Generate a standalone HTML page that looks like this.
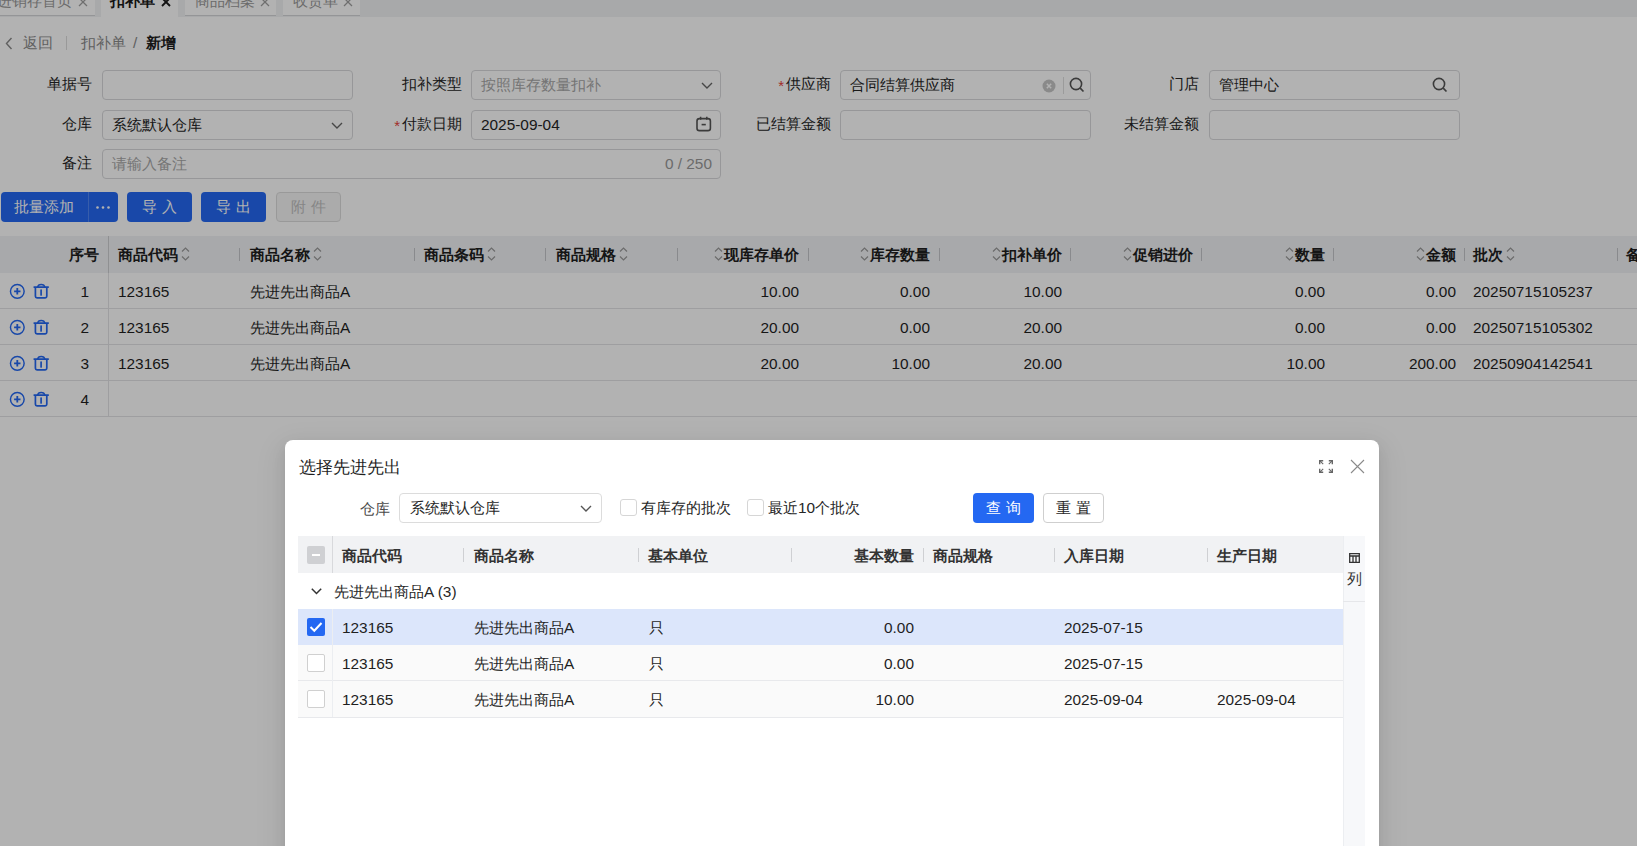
<!DOCTYPE html>
<html><head><meta charset="utf-8"><style>
*{box-sizing:border-box;margin:0;padding:0}
html,body{width:1637px;height:846px;overflow:hidden;background:#fff;font-family:"Liberation Sans",sans-serif;color:#333;font-size:15.4px}
.a{position:absolute;white-space:nowrap}
.tabbar{position:absolute;left:0;top:0;width:1637px;height:17px;background:#f1f2f4}
.tab{position:absolute;top:-11px;height:27px;background:#fff;border-bottom:1px solid #d5d6d9;color:#9a9a9a;font-size:15px;line-height:24px}
.tab.act{border-bottom:none;height:28px;color:#1a1a1a;font-weight:bold}
.lbl{position:absolute;text-align:right;white-space:nowrap;color:#262626;line-height:20px}
.req{color:#e8413b;font-size:15px;position:relative;top:2px;margin-right:2px}
.inp{position:absolute;height:30px;border:1px solid #d8d9dc;border-radius:4px;background:#fff;line-height:28px;padding-left:9px;white-space:nowrap;color:#262626}
.btn{position:absolute;top:192px;height:30px;border-radius:4px;background:#2468f2;color:#fff;text-align:center;line-height:30px}
.th{position:absolute;top:236px;height:37px;background:#f1f2f5;width:1637px;left:0}
.hc{position:absolute;top:0;height:37px;line-height:37px;font-weight:bold;color:#1f1f1f;white-space:nowrap}
.dv{position:absolute;top:12px;width:1px;height:13px;background:#c4c6ca}
.row{position:absolute;left:0;width:1637px;height:36px;border-bottom:1px solid #e2e3e6;background:#fff}
.c{position:absolute;top:1px;line-height:36px;white-space:nowrap;color:#1f1f1f}
.r{text-align:right}
.mask{position:absolute;left:0;top:0;width:1637px;height:846px;background:rgba(0,0,0,0.3)}
.modal{position:absolute;left:285px;top:440px;width:1094px;height:460px;background:#fff;border-radius:8px;overflow:hidden;box-shadow:0 6px 16px 0 rgba(0,0,0,.08),0 3px 6px -4px rgba(0,0,0,.12),0 9px 28px 8px rgba(0,0,0,.05)}
</style></head><body>
<div class="tabbar"></div>
<div class="tab" style="left:-10px;width:105px"><span class="a" style="left:7px;top:0">进销存首页</span><svg class="a" style="left:88px;top:8px" width="10" height="10" viewBox="0 0 10 10"><path d="M1 1L9 9M9 1L1 9" stroke="#a0a0a0" stroke-width="1.3"/></svg></div>
<div class="tab act" style="left:101px;width:77px"><span class="a" style="left:9px;top:0">扣补单</span><svg class="a" style="left:59.5px;top:8px" width="10" height="10" viewBox="0 0 10 10"><path d="M1 1L9 9M9 1L1 9" stroke="#1a1a1a" stroke-width="1.9"/></svg></div>
<div class="tab" style="left:185px;width:91px"><span class="a" style="left:9.5px;top:0">商品档案</span><svg class="a" style="left:74.5px;top:8px" width="10" height="10" viewBox="0 0 10 10"><path d="M1 1L9 9M9 1L1 9" stroke="#a0a0a0" stroke-width="1.3"/></svg></div>
<div class="tab" style="left:283px;width:77px"><span class="a" style="left:9.5px;top:0">收货单</span><svg class="a" style="left:60px;top:8px" width="10" height="10" viewBox="0 0 10 10"><path d="M1 1L9 9M9 1L1 9" stroke="#a0a0a0" stroke-width="1.3"/></svg></div>
<svg class="a" style="left:5px;top:37px" width="8" height="13" viewBox="0 0 8 13"><path d="M6.5 1L1.5 6.5 6.5 12" fill="none" stroke="#8a8a8a" stroke-width="1.4"/></svg>
<div class="a" style="left:23px;top:33px;line-height:20px;color:#8a8a8a">返回</div>
<div class="a" style="left:66px;top:36px;width:1px;height:14px;background:#dcdcdc"></div>
<div class="a" style="left:81px;top:33px;line-height:20px;color:#8a8a8a">扣补单</div>
<div class="a" style="left:133px;top:33px;line-height:20px;color:#8a8a8a">/</div>
<div class="a" style="left:146px;top:33px;line-height:20px;color:#1f1f1f;font-weight:bold">新增</div>
<div class="lbl" style="left:-208px;width:300px;top:74px">单据号</div>
<div class="inp" style="left:102px;top:70px;width:251px"></div>
<div class="lbl" style="left:162px;width:300px;top:74px">扣补类型</div>
<div class="inp" style="left:471px;top:70px;width:250px;color:#a8a8a8">按照库存数量扣补<svg class="a" style="left:229px;top:11px" width="12" height="7" viewBox="0 0 12 7"><path d="M1 1l5 5 5-5" fill="none" stroke="#666" stroke-width="1.4"/></svg></div>
<div class="lbl" style="left:531px;width:300px;top:74px"><span class="req">*</span>供应商</div>
<div class="inp" style="left:840px;top:70px;width:251px">合同结算供应商<svg class="a" style="left:201px;top:8px" width="14" height="14" viewBox="0 0 14 14"><circle cx="7" cy="7" r="6.5" fill="#c6c6c6"/><path d="M4.8 4.8l4.4 4.4M9.2 4.8l-4.4 4.4" stroke="#fff" stroke-width="1.5"/></svg><div class="a" style="left:222px;top:6px;width:1px;height:17px;background:#dedede"></div><svg class="a" style="left:228px;top:6px" width="16" height="16" viewBox="0 0 16 16"><circle cx="7" cy="7" r="5.6" fill="none" stroke="#555" stroke-width="1.6"/><path d="M11.2 11.2L14.5 14.5" stroke="#555" stroke-width="1.7"/></svg></div>
<div class="lbl" style="left:899px;width:300px;top:74px">门店</div>
<div class="inp" style="left:1209px;top:70px;width:251px">管理中心<svg class="a" style="left:222px;top:6px" width="16" height="16" viewBox="0 0 16 16"><circle cx="7" cy="7" r="5.6" fill="none" stroke="#555" stroke-width="1.6"/><path d="M11.2 11.2L14.5 14.5" stroke="#555" stroke-width="1.7"/></svg></div>
<div class="lbl" style="left:-208px;width:300px;top:114px">仓库</div>
<div class="inp" style="left:102px;top:110px;width:251px">系统默认仓库<svg class="a" style="left:228px;top:11px" width="12" height="7" viewBox="0 0 12 7"><path d="M1 1l5 5 5-5" fill="none" stroke="#666" stroke-width="1.4"/></svg></div>
<div class="lbl" style="left:162px;width:300px;top:114px"><span class="req">*</span>付款日期</div>
<div class="inp" style="left:471px;top:110px;width:250px">2025-09-04<svg class="a" style="left:224px;top:5px" width="16" height="16" viewBox="0 0 16 16"><rect x="1" y="2.6" width="13.4" height="12" rx="2.4" fill="none" stroke="#555" stroke-width="1.6"/><path d="M4.6 0.8v3M10.8 0.8v3" stroke="#555" stroke-width="1.5"/><path d="M5.6 8.6h4.2" stroke="#555" stroke-width="1.6"/></svg></div>
<div class="lbl" style="left:531px;width:300px;top:114px">已结算金额</div>
<div class="inp" style="left:840px;top:110px;width:251px"></div>
<div class="lbl" style="left:899px;width:300px;top:114px">未结算金额</div>
<div class="inp" style="left:1209px;top:110px;width:251px"></div>
<div class="lbl" style="left:-208px;width:300px;top:153px">备注</div>
<div class="inp" style="left:102px;top:149px;width:619px;color:#a8a8a8">请输入备注<span class="a" style="right:8px;top:0;color:#9a9a9a">0 / 250</span></div>
<div class="btn" style="left:1px;width:117px"><span class="a" style="left:13px;top:0">批量添加</span><span class="a" style="left:87px;top:0;width:1px;height:30px;background:#4f86f5"></span><svg class="a" style="left:95px;top:14px" width="14" height="3" viewBox="0 0 14 3"><circle cx="1.5" cy="1.5" r="1.3" fill="#fff"/><circle cx="7" cy="1.5" r="1.3" fill="#fff"/><circle cx="12.5" cy="1.5" r="1.3" fill="#fff"/></svg></div>
<div class="btn" style="left:127px;width:65px;letter-spacing:5px;text-indent:5px">导入</div>
<div class="btn" style="left:201px;width:65px;letter-spacing:5px;text-indent:5px">导出</div>
<div class="btn" style="left:276px;width:65px;letter-spacing:5px;text-indent:5px;background:#f5f5f5;border:1px solid #dcdcdc;color:#c0c0c0;line-height:28px">附件</div>
<div class="th"><div class="a" style="left:108px;top:0;width:1px;height:37px;background:#cdced2"></div><div class="hc r" style="left:0;width:99px">序号</div><div class="hc" style="left:118px">商品代码</div><svg class="a" style="left:181px;top:11px" width="9" height="14" viewBox="0 0 9 14"><path d="M1 4.5l3.5-3.5 3.5 3.5M1 9.5l3.5 3.5 3.5-3.5" fill="none" stroke="#9a9a9a" stroke-width="1.2"/></svg><div class="hc" style="left:250px">商品名称</div><svg class="a" style="left:313px;top:11px" width="9" height="14" viewBox="0 0 9 14"><path d="M1 4.5l3.5-3.5 3.5 3.5M1 9.5l3.5 3.5 3.5-3.5" fill="none" stroke="#9a9a9a" stroke-width="1.2"/></svg><div class="hc" style="left:424px">商品条码</div><svg class="a" style="left:487px;top:11px" width="9" height="14" viewBox="0 0 9 14"><path d="M1 4.5l3.5-3.5 3.5 3.5M1 9.5l3.5 3.5 3.5-3.5" fill="none" stroke="#9a9a9a" stroke-width="1.2"/></svg><div class="hc" style="left:556px">商品规格</div><svg class="a" style="left:619px;top:11px" width="9" height="14" viewBox="0 0 9 14"><path d="M1 4.5l3.5-3.5 3.5 3.5M1 9.5l3.5 3.5 3.5-3.5" fill="none" stroke="#9a9a9a" stroke-width="1.2"/></svg><div class="hc" style="left:1473px">批次</div><svg class="a" style="left:1506px;top:11px" width="9" height="14" viewBox="0 0 9 14"><path d="M1 4.5l3.5-3.5 3.5 3.5M1 9.5l3.5 3.5 3.5-3.5" fill="none" stroke="#9a9a9a" stroke-width="1.2"/></svg><div class="hc" style="left:1626px">备注</div><div class="hc r" style="left:677px;width:122px">现库存单价</div><svg class="a" style="left:714px;top:11px" width="9" height="14" viewBox="0 0 9 14"><path d="M1 4.5l3.5-3.5 3.5 3.5M1 9.5l3.5 3.5 3.5-3.5" fill="none" stroke="#9a9a9a" stroke-width="1.2"/></svg><div class="hc r" style="left:808px;width:122px">库存数量</div><svg class="a" style="left:860px;top:11px" width="9" height="14" viewBox="0 0 9 14"><path d="M1 4.5l3.5-3.5 3.5 3.5M1 9.5l3.5 3.5 3.5-3.5" fill="none" stroke="#9a9a9a" stroke-width="1.2"/></svg><div class="hc r" style="left:939px;width:123px">扣补单价</div><svg class="a" style="left:992px;top:11px" width="9" height="14" viewBox="0 0 9 14"><path d="M1 4.5l3.5-3.5 3.5 3.5M1 9.5l3.5 3.5 3.5-3.5" fill="none" stroke="#9a9a9a" stroke-width="1.2"/></svg><div class="hc r" style="left:1070px;width:123px">促销进价</div><svg class="a" style="left:1123px;top:11px" width="9" height="14" viewBox="0 0 9 14"><path d="M1 4.5l3.5-3.5 3.5 3.5M1 9.5l3.5 3.5 3.5-3.5" fill="none" stroke="#9a9a9a" stroke-width="1.2"/></svg><div class="hc r" style="left:1201px;width:124px">数量</div><svg class="a" style="left:1285px;top:11px" width="9" height="14" viewBox="0 0 9 14"><path d="M1 4.5l3.5-3.5 3.5 3.5M1 9.5l3.5 3.5 3.5-3.5" fill="none" stroke="#9a9a9a" stroke-width="1.2"/></svg><div class="hc r" style="left:1333px;width:123px">金额</div><svg class="a" style="left:1416px;top:11px" width="9" height="14" viewBox="0 0 9 14"><path d="M1 4.5l3.5-3.5 3.5 3.5M1 9.5l3.5 3.5 3.5-3.5" fill="none" stroke="#9a9a9a" stroke-width="1.2"/></svg><div class="dv" style="left:239px"></div><div class="dv" style="left:414px"></div><div class="dv" style="left:545px"></div><div class="dv" style="left:677px"></div><div class="dv" style="left:808px"></div><div class="dv" style="left:939px"></div><div class="dv" style="left:1070px"></div><div class="dv" style="left:1201px"></div><div class="dv" style="left:1333px"></div><div class="dv" style="left:1464px"></div><div class="dv" style="left:1617px"></div></div>
<div class="row" style="top:273px"><svg class="a" style="left:9px;top:10px" width="17" height="17" viewBox="0 0 17 17"><circle cx="8.3" cy="8.3" r="6.85" fill="none" stroke="#2468f2" stroke-width="1.45"/><path d="M8.3 5.1v6.4M5.1 8.3h6.4" stroke="#2468f2" stroke-width="1.8"/></svg><svg class="a" style="left:33px;top:10px" width="17" height="17" viewBox="0 0 17 17"><path d="M1.2 4.1h14" fill="none" stroke="#2468f2" stroke-width="1.7" stroke-linecap="round"/><path d="M4.6 4.1Q5 1.4 8.2 1.4T11.8 4.1" fill="none" stroke="#2468f2" stroke-width="1.5"/><path d="M2.4 4.6V13.3a1.6 1.6 0 0 0 1.6 1.6H12.2a1.6 1.6 0 0 0 1.6-1.6V4.6" fill="none" stroke="#2468f2" stroke-width="1.7"/><path d="M8.1 7v5" stroke="#2468f2" stroke-width="1.7" stroke-linecap="round"/></svg><div class="a" style="left:108px;top:0;width:1px;height:36px;background:#e2e3e6"></div><div class="c r" style="left:0;width:89px">1</div><div class="c" style="left:118px">123165</div><div class="c" style="left:250px">先进先出商品A</div><div class="c r" style="left:677px;width:122px">10.00</div><div class="c r" style="left:808px;width:122px">0.00</div><div class="c r" style="left:939px;width:123px">10.00</div><div class="c r" style="left:1201px;width:124px">0.00</div><div class="c r" style="left:1333px;width:123px">0.00</div><div class="c" style="left:1473px">20250715105237</div></div>
<div class="row" style="top:309px"><svg class="a" style="left:9px;top:10px" width="17" height="17" viewBox="0 0 17 17"><circle cx="8.3" cy="8.3" r="6.85" fill="none" stroke="#2468f2" stroke-width="1.45"/><path d="M8.3 5.1v6.4M5.1 8.3h6.4" stroke="#2468f2" stroke-width="1.8"/></svg><svg class="a" style="left:33px;top:10px" width="17" height="17" viewBox="0 0 17 17"><path d="M1.2 4.1h14" fill="none" stroke="#2468f2" stroke-width="1.7" stroke-linecap="round"/><path d="M4.6 4.1Q5 1.4 8.2 1.4T11.8 4.1" fill="none" stroke="#2468f2" stroke-width="1.5"/><path d="M2.4 4.6V13.3a1.6 1.6 0 0 0 1.6 1.6H12.2a1.6 1.6 0 0 0 1.6-1.6V4.6" fill="none" stroke="#2468f2" stroke-width="1.7"/><path d="M8.1 7v5" stroke="#2468f2" stroke-width="1.7" stroke-linecap="round"/></svg><div class="a" style="left:108px;top:0;width:1px;height:36px;background:#e2e3e6"></div><div class="c r" style="left:0;width:89px">2</div><div class="c" style="left:118px">123165</div><div class="c" style="left:250px">先进先出商品A</div><div class="c r" style="left:677px;width:122px">20.00</div><div class="c r" style="left:808px;width:122px">0.00</div><div class="c r" style="left:939px;width:123px">20.00</div><div class="c r" style="left:1201px;width:124px">0.00</div><div class="c r" style="left:1333px;width:123px">0.00</div><div class="c" style="left:1473px">20250715105302</div></div>
<div class="row" style="top:345px"><svg class="a" style="left:9px;top:10px" width="17" height="17" viewBox="0 0 17 17"><circle cx="8.3" cy="8.3" r="6.85" fill="none" stroke="#2468f2" stroke-width="1.45"/><path d="M8.3 5.1v6.4M5.1 8.3h6.4" stroke="#2468f2" stroke-width="1.8"/></svg><svg class="a" style="left:33px;top:10px" width="17" height="17" viewBox="0 0 17 17"><path d="M1.2 4.1h14" fill="none" stroke="#2468f2" stroke-width="1.7" stroke-linecap="round"/><path d="M4.6 4.1Q5 1.4 8.2 1.4T11.8 4.1" fill="none" stroke="#2468f2" stroke-width="1.5"/><path d="M2.4 4.6V13.3a1.6 1.6 0 0 0 1.6 1.6H12.2a1.6 1.6 0 0 0 1.6-1.6V4.6" fill="none" stroke="#2468f2" stroke-width="1.7"/><path d="M8.1 7v5" stroke="#2468f2" stroke-width="1.7" stroke-linecap="round"/></svg><div class="a" style="left:108px;top:0;width:1px;height:36px;background:#e2e3e6"></div><div class="c r" style="left:0;width:89px">3</div><div class="c" style="left:118px">123165</div><div class="c" style="left:250px">先进先出商品A</div><div class="c r" style="left:677px;width:122px">20.00</div><div class="c r" style="left:808px;width:122px">10.00</div><div class="c r" style="left:939px;width:123px">20.00</div><div class="c r" style="left:1201px;width:124px">10.00</div><div class="c r" style="left:1333px;width:123px">200.00</div><div class="c" style="left:1473px">20250904142541</div></div>
<div class="row" style="top:381px"><svg class="a" style="left:9px;top:10px" width="17" height="17" viewBox="0 0 17 17"><circle cx="8.3" cy="8.3" r="6.85" fill="none" stroke="#2468f2" stroke-width="1.45"/><path d="M8.3 5.1v6.4M5.1 8.3h6.4" stroke="#2468f2" stroke-width="1.8"/></svg><svg class="a" style="left:33px;top:10px" width="17" height="17" viewBox="0 0 17 17"><path d="M1.2 4.1h14" fill="none" stroke="#2468f2" stroke-width="1.7" stroke-linecap="round"/><path d="M4.6 4.1Q5 1.4 8.2 1.4T11.8 4.1" fill="none" stroke="#2468f2" stroke-width="1.5"/><path d="M2.4 4.6V13.3a1.6 1.6 0 0 0 1.6 1.6H12.2a1.6 1.6 0 0 0 1.6-1.6V4.6" fill="none" stroke="#2468f2" stroke-width="1.7"/><path d="M8.1 7v5" stroke="#2468f2" stroke-width="1.7" stroke-linecap="round"/></svg><div class="a" style="left:108px;top:0;width:1px;height:36px;background:#e2e3e6"></div><div class="c r" style="left:0;width:89px">4</div></div>
<div class="mask"></div>
<div class="modal"><div class="a" style="left:14px;top:17px;font-size:17px;line-height:22px;color:#1f1f1f">选择先进先出</div>
<svg class="a" style="left:1034px;top:20px" width="14" height="13" viewBox="0 0 14 13"><g fill="none" stroke="#666" stroke-width="1.4"><path d="M0.7 4.2V0.7H4.2M9.8 0.7h3.5V4.2M13.3 8.8v3.5H9.8M4.2 12.3H0.7V8.8"/><path d="M1.2 1.2l3 3M12.8 1.2l-3 3M12.8 11.8l-3-3M1.2 11.8l3-3" stroke-width="1.1"/></g></svg>
<svg class="a" style="left:1065px;top:19px" width="15" height="15" viewBox="0 0 15 15"><path d="M1 1L14 14M14 1L1 14" stroke="#8a8a8a" stroke-width="1.1" fill="none"/></svg>
<div class="a" style="left:75px;top:59px;line-height:20px;color:#4a4a4a">仓库</div>
<div class="a" style="left:114px;top:53px;width:203px;height:30px;border:1px solid #dcdcdc;border-radius:4px;line-height:28px;padding-left:10px;color:#262626">系统默认仓库<svg class="a" style="left:180px;top:11px" width="12" height="7" viewBox="0 0 12 7"><path d="M1 1l5 5 5-5" fill="none" stroke="#555" stroke-width="1.4"/></svg></div>
<div class="a" style="left:335px;top:59px;width:17px;height:17px;border:1px solid #d6d6d6;border-radius:3px"></div>
<div class="a" style="left:356px;top:58px;line-height:20px;color:#262626">有库存的批次</div>
<div class="a" style="left:462px;top:59px;width:17px;height:17px;border:1px solid #d6d6d6;border-radius:3px"></div>
<div class="a" style="left:483px;top:58px;line-height:20px;color:#262626">最近10个批次</div>
<div class="a" style="left:688px;top:53px;width:61px;height:30px;border-radius:4px;background:#2468f2;color:#fff;line-height:30px;text-align:center;letter-spacing:5px;text-indent:5px">查询</div>
<div class="a" style="left:758px;top:53px;width:61px;height:30px;border-radius:4px;border:1px solid #cfcfcf;color:#262626;line-height:28px;text-align:center;letter-spacing:5px;text-indent:5px">重置</div>
<div class="a" style="left:13px;top:96px;width:1045px;height:37px;background:#f1f2f4"></div>
<div class="a" style="left:1058px;top:96px;width:22px;height:400px;background:#f7f8fa;border-left:1px solid #eceef1"></div>
<div class="a" style="left:1058px;top:161px;width:22px;height:1px;background:#e6e7ea"></div>
<svg class="a" style="left:1064px;top:113px" width="11" height="10" viewBox="0 0 11 10"><path d="M0.7 0.7h9.6v8.6H0.7zM0.7 3h9.6M4 3v6.3M7 3v6.3" fill="none" stroke="#333" stroke-width="1.3"/></svg>
<div class="a" style="left:1062px;top:129px;line-height:20px;color:#333;font-size:15px">列</div>
<div class="a" style="left:47px;top:96px;width:1px;height:37px;background:#d8d9dc"></div>
<div class="a" style="left:22px;top:106px;width:18px;height:18px;background:#cfd0d3;border-radius:2px"><div class="a" style="left:5px;top:8px;width:8px;height:2px;background:#fff"></div></div>
<div class="a" style="left:57px;top:97px;line-height:37px;font-weight:bold;color:#333">商品代码</div>
<div class="a" style="left:189px;top:97px;line-height:37px;font-weight:bold;color:#333">商品名称</div>
<div class="a" style="left:363px;top:97px;line-height:37px;font-weight:bold;color:#333">基本单位</div>
<div class="a" style="left:507px;top:97px;width:122px;text-align:right;line-height:37px;font-weight:bold;color:#333">基本数量</div>
<div class="a" style="left:648px;top:97px;line-height:37px;font-weight:bold;color:#333">商品规格</div>
<div class="a" style="left:779px;top:97px;line-height:37px;font-weight:bold;color:#333">入库日期</div>
<div class="a" style="left:932px;top:97px;line-height:37px;font-weight:bold;color:#333">生产日期</div>
<div class="a" style="left:178px;top:108px;width:1px;height:14px;background:#cfd0d3"></div>
<div class="a" style="left:353px;top:108px;width:1px;height:14px;background:#cfd0d3"></div>
<div class="a" style="left:506px;top:108px;width:1px;height:14px;background:#cfd0d3"></div>
<div class="a" style="left:638px;top:108px;width:1px;height:14px;background:#cfd0d3"></div>
<div class="a" style="left:769px;top:108px;width:1px;height:14px;background:#cfd0d3"></div>
<div class="a" style="left:922px;top:108px;width:1px;height:14px;background:#cfd0d3"></div>
<svg class="a" style="left:26px;top:148px" width="11" height="7" viewBox="0 0 11 7"><path d="M0.8 0.8l4.7 4.7 4.7-4.7" fill="none" stroke="#333" stroke-width="1.5"/></svg>
<div class="a" style="left:49px;top:142px;line-height:20px;color:#262626">先进先出商品A (3)</div>
<div class="a" style="left:13px;top:169px;width:1045px;height:36px;background:#dce6fb"></div>
<div class="a" style="left:47px;top:169px;width:1px;height:36px;background:#eceef1"></div>
<div class="a" style="left:22px;top:178px;width:18px;height:18px;background:#2468f2;border-radius:2px"><svg class="a" style="left:2px;top:3px" width="14" height="12" viewBox="0 0 14 12"><path d="M1.5 6l3.8 3.8L12.5 2" fill="none" stroke="#fff" stroke-width="2"/></svg></div>
<div class="a" style="left:57px;top:169px;line-height:37px;color:#1f1f1f">123165</div>
<div class="a" style="left:189px;top:169px;line-height:37px;color:#1f1f1f">先进先出商品A</div>
<div class="a" style="left:364px;top:169px;line-height:37px;color:#1f1f1f">只</div>
<div class="a" style="left:507px;top:169px;width:122px;text-align:right;line-height:37px;color:#1f1f1f">0.00</div>
<div class="a" style="left:779px;top:169px;line-height:37px;color:#1f1f1f">2025-07-15</div>
<div class="a" style="left:13px;top:205px;width:1045px;height:36px;background:#fafafa"></div>
<div class="a" style="left:13px;top:240px;width:1045px;height:1px;background:#e8e9ec"></div>
<div class="a" style="left:47px;top:205px;width:1px;height:36px;background:#eceef1"></div>
<div class="a" style="left:22px;top:214px;width:18px;height:18px;border:1px solid #d0d0d0;border-radius:2px;background:#fff"></div>
<div class="a" style="left:57px;top:205px;line-height:37px;color:#1f1f1f">123165</div>
<div class="a" style="left:189px;top:205px;line-height:37px;color:#1f1f1f">先进先出商品A</div>
<div class="a" style="left:364px;top:205px;line-height:37px;color:#1f1f1f">只</div>
<div class="a" style="left:507px;top:205px;width:122px;text-align:right;line-height:37px;color:#1f1f1f">0.00</div>
<div class="a" style="left:779px;top:205px;line-height:37px;color:#1f1f1f">2025-07-15</div>
<div class="a" style="left:13px;top:241px;width:1045px;height:36px;background:#fafafa"></div>
<div class="a" style="left:13px;top:277px;width:1045px;height:1px;background:#e8e9ec"></div>
<div class="a" style="left:47px;top:241px;width:1px;height:36px;background:#eceef1"></div>
<div class="a" style="left:22px;top:250px;width:18px;height:18px;border:1px solid #d0d0d0;border-radius:2px;background:#fff"></div>
<div class="a" style="left:57px;top:241px;line-height:37px;color:#1f1f1f">123165</div>
<div class="a" style="left:189px;top:241px;line-height:37px;color:#1f1f1f">先进先出商品A</div>
<div class="a" style="left:364px;top:241px;line-height:37px;color:#1f1f1f">只</div>
<div class="a" style="left:507px;top:241px;width:122px;text-align:right;line-height:37px;color:#1f1f1f">10.00</div>
<div class="a" style="left:779px;top:241px;line-height:37px;color:#1f1f1f">2025-09-04</div>
<div class="a" style="left:932px;top:241px;line-height:37px;color:#1f1f1f">2025-09-04</div></div>
</body></html>
